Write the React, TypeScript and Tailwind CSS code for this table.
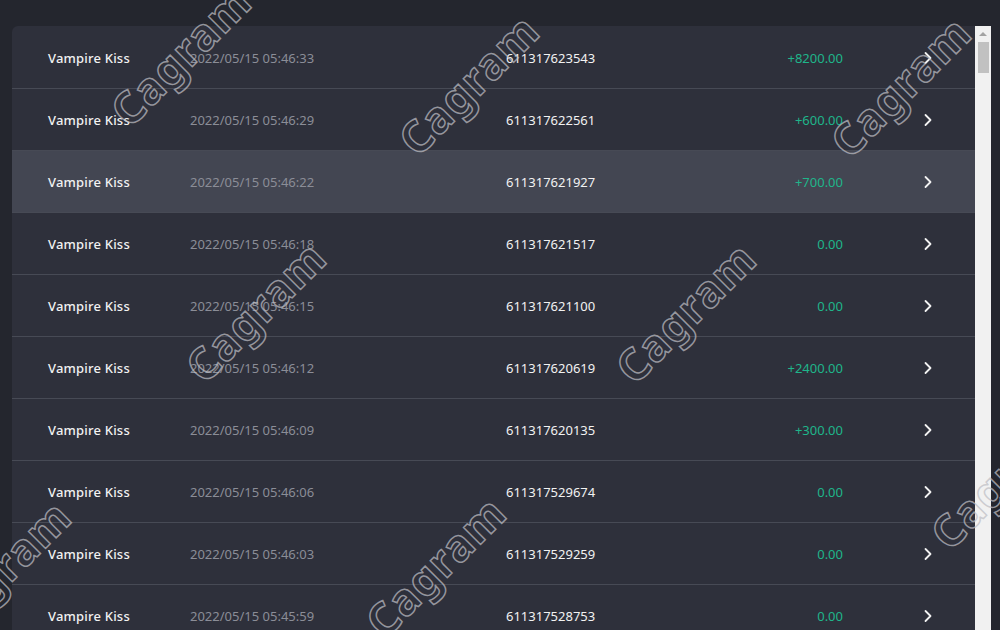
import React from "react";

const rows = [
  { t: "2022/05/15 05:46:33", id: "611317623543", a: "+8200.00" },
  { t: "2022/05/15 05:46:29", id: "611317622561", a: "+600.00" },
  { t: "2022/05/15 05:46:22", id: "611317621927", a: "+700.00", hl: true },
  { t: "2022/05/15 05:46:18", id: "611317621517", a: "0.00" },
  { t: "2022/05/15 05:46:15", id: "611317621100", a: "0.00" },
  { t: "2022/05/15 05:46:12", id: "611317620619", a: "+2400.00" },
  { t: "2022/05/15 05:46:09", id: "611317620135", a: "+300.00" },
  { t: "2022/05/15 05:46:06", id: "611317529674", a: "0.00" },
  { t: "2022/05/15 05:46:03", id: "611317529259", a: "0.00" },
  { t: "2022/05/15 05:45:59", id: "611317528753", a: "0.00" },
];

const marks = [
  { x: 180, y: 55 },
  { x: 468, y: 84 },
  { x: 900, y: 86 },
  { x: 255, y: 311 },
  { x: 685, y: 312 },
  { x: 0, y: 570 },
  { x: 435, y: 566 },
  { x: 1000, y: 478 },
];

function Chevron() {
  return (
    <svg width="10" height="14" viewBox="0 0 10 14" fill="none">
      <path d="M2.5 2 L7.5 7 L2.5 12" stroke="#f2f2f2" strokeWidth="1.8" strokeLinecap="round" strokeLinejoin="round" />
    </svg>
  );
}

export default function App() {
  return (
    <div
      className="relative w-[1000px] h-[630px] overflow-hidden bg-[#24262e] flex pt-[26px] pl-[12px]"
      style={{ fontFamily: '"Noto Sans", "Open Sans", sans-serif' }}
    >
      <div className="w-[963px] bg-[#2e303b] rounded-tl-[6px] overflow-hidden pt-[1px]">
        {rows.map((r, i) => (
          <div
            key={i}
            className={`flex items-center h-[62px] pt-[2px] border-b border-[#474a55] text-[13px] ${r.hl ? "bg-[#434652]" : ""}`}
          >
            <div className="w-[178px] pl-[36px] text-[#f2f2f2] font-medium tracking-[0.2px]">Vampire Kiss</div>
            <div className="w-[316px] text-[#8b8d97]">{r.t}</div>
            <div className="w-[200px] text-[#f2f2f2]">{r.id}</div>
            <div className="w-[137px] text-right text-[#1fb58a]">{r.a}</div>
            <div className="ml-[80px] flex items-center -mt-[2px]">
              <Chevron />
            </div>
          </div>
        ))}
      </div>
      <div className="w-[16px] bg-[#f1f1f1] flex flex-col items-center">
        <div className="h-[15px] flex items-center justify-center">
          <div className="w-0 h-0 border-l-[4px] border-r-[4px] border-b-[4px] border-l-transparent border-r-transparent border-b-[#a3a3a3]" />
        </div>
        <div className="w-[11px] h-[31px] bg-[#c1c1c1] mt-[1px]" />
      </div>
      {marks.map((m, i) => (
        <div
          key={i}
          className="absolute pointer-events-none text-[44px] font-bold text-transparent [-webkit-text-stroke:1.5px_rgba(190,190,196,0.72)] tracking-[1px] leading-none"
          style={{
            left: m.x,
            top: m.y,
            transform: "translate(-50%, -50%) rotate(-45deg)",
            fontFamily: '"Noto Sans", sans-serif',
          }}
        >
          Cagram
        </div>
      ))}
    </div>
  );
}
